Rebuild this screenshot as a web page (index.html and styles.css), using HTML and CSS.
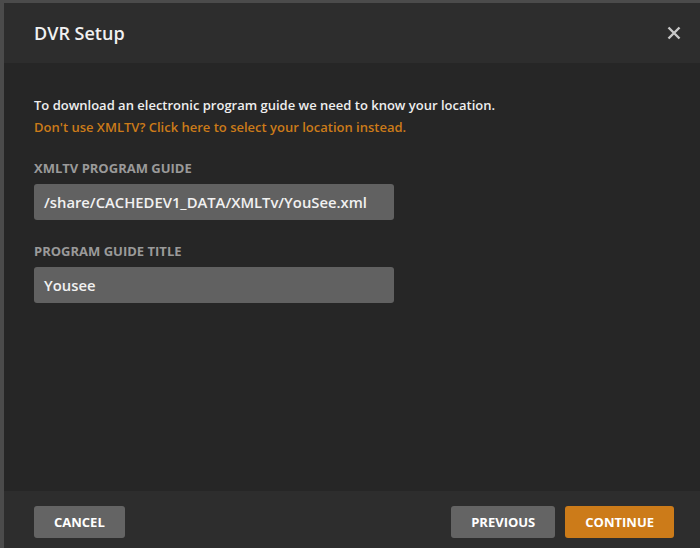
FILE: index.html
```html
<!DOCTYPE html>
<html>
<head>
<meta charset="utf-8">
<link rel="stylesheet" href="styles.css">
</head>
<body>
<div class="modal">
  <div class="modal-header">
    <h1 class="title">DVR Setup</h1>
    <button class="close" aria-label="Close">
      <svg width="14" height="14" viewBox="0 0 14 14"><path d="M1.5 1.5L12.5 12.5M12.5 1.5L1.5 12.5" stroke="#c8c8c8" stroke-width="2.4" stroke-linecap="butt"/></svg>
    </button>
  </div>
  <div class="modal-body">
    <p class="intro">To download an electronic program guide we need to know your location.</p>
    <a class="link">Don't use XMLTV? Click here to select your location instead.</a>
    <div class="field">
      <label class="label">XMLTV PROGRAM GUIDE</label>
      <div class="input">/share/CACHEDEV1_DATA/XMLTv/YouSee.xml</div>
    </div>
    <div class="field">
      <label class="label">PROGRAM GUIDE TITLE</label>
      <div class="input">Yousee</div>
    </div>
  </div>
  <div class="modal-footer">
    <button class="btn btn-gray">CANCEL</button>
    <div class="spacer"></div>
    <button class="btn btn-gray">PREVIOUS</button>
    <button class="btn btn-orange">CONTINUE</button>
  </div>
</div>
</body>
</html>
```
FILE: styles.css
```css
html, body {
  margin: 0;
  padding: 0;
  height: 100%;
  overflow: hidden;
}
body {
  background: #4b4b4b;
  padding: 3px 0 0 4px;
  box-sizing: border-box;
  font-family: "Open Sans", "Liberation Sans", sans-serif;
}
.modal {
  width: 700px;
  height: 560px;
  display: flex;
  flex-direction: column;
  background: #262626;
}
.modal-header {
  height: 60px;
  flex: none;
  background: #2d2d2d;
  display: flex;
  align-items: center;
  padding: 0 23px 0 30px;
  box-sizing: border-box;
}
.title {
  margin: 0;
  flex: 1;
  font-size: 18px;
  font-weight: 600;
  color: #f1f1f1;
  line-height: 24px;
}
.close {
  background: none;
  border: 0;
  padding: 0;
  width: 14px;
  height: 14px;
  display: flex;
}
.modal-body {
  height: 428px;
  flex: none;
  padding: 31px 30px 0 30px;
  box-sizing: border-box;
}
.intro {
  margin: 0;
  font-size: 13px;
  font-weight: 600;
  color: #eeeeee;
  line-height: 22px;
}
.link {
  display: block;
  font-size: 13px;
  font-weight: 600;
  color: #cc7b19;
  line-height: 22px;
}
.field {
  margin-top: 21px;
  width: 360px;
}
.field + .field {
  margin-top: 22px;
}
.label {
  display: block;
  font-size: 13px;
  font-weight: 700;
  color: #9a9a9a;
  line-height: 18px;
  margin-bottom: 7px;
}
.input {
  height: 36px;
  background: #616161;
  border-radius: 3px;
  padding: 0 10px;
  display: flex;
  align-items: center;
  font-size: 14.8px;
  font-weight: 600;
  color: #f1f1f1;
}
.modal-footer {
  flex: 1;
  background: #2d2d2d;
  display: flex;
  align-items: flex-start;
  padding: 15px 30px 0 30px;
  gap: 10px;
}
.spacer {
  flex: 1;
}
.btn {
  height: 32px;
  border: 0;
  border-radius: 3px;
  font-family: "Open Sans", "Liberation Sans", sans-serif;
  font-size: 13px;
  font-weight: 700;
  color: #ffffff;
  padding: 0 20px;
}
.btn-gray {
  background: #646464;
}
.btn-orange {
  background: #cc7b19;
}
```
